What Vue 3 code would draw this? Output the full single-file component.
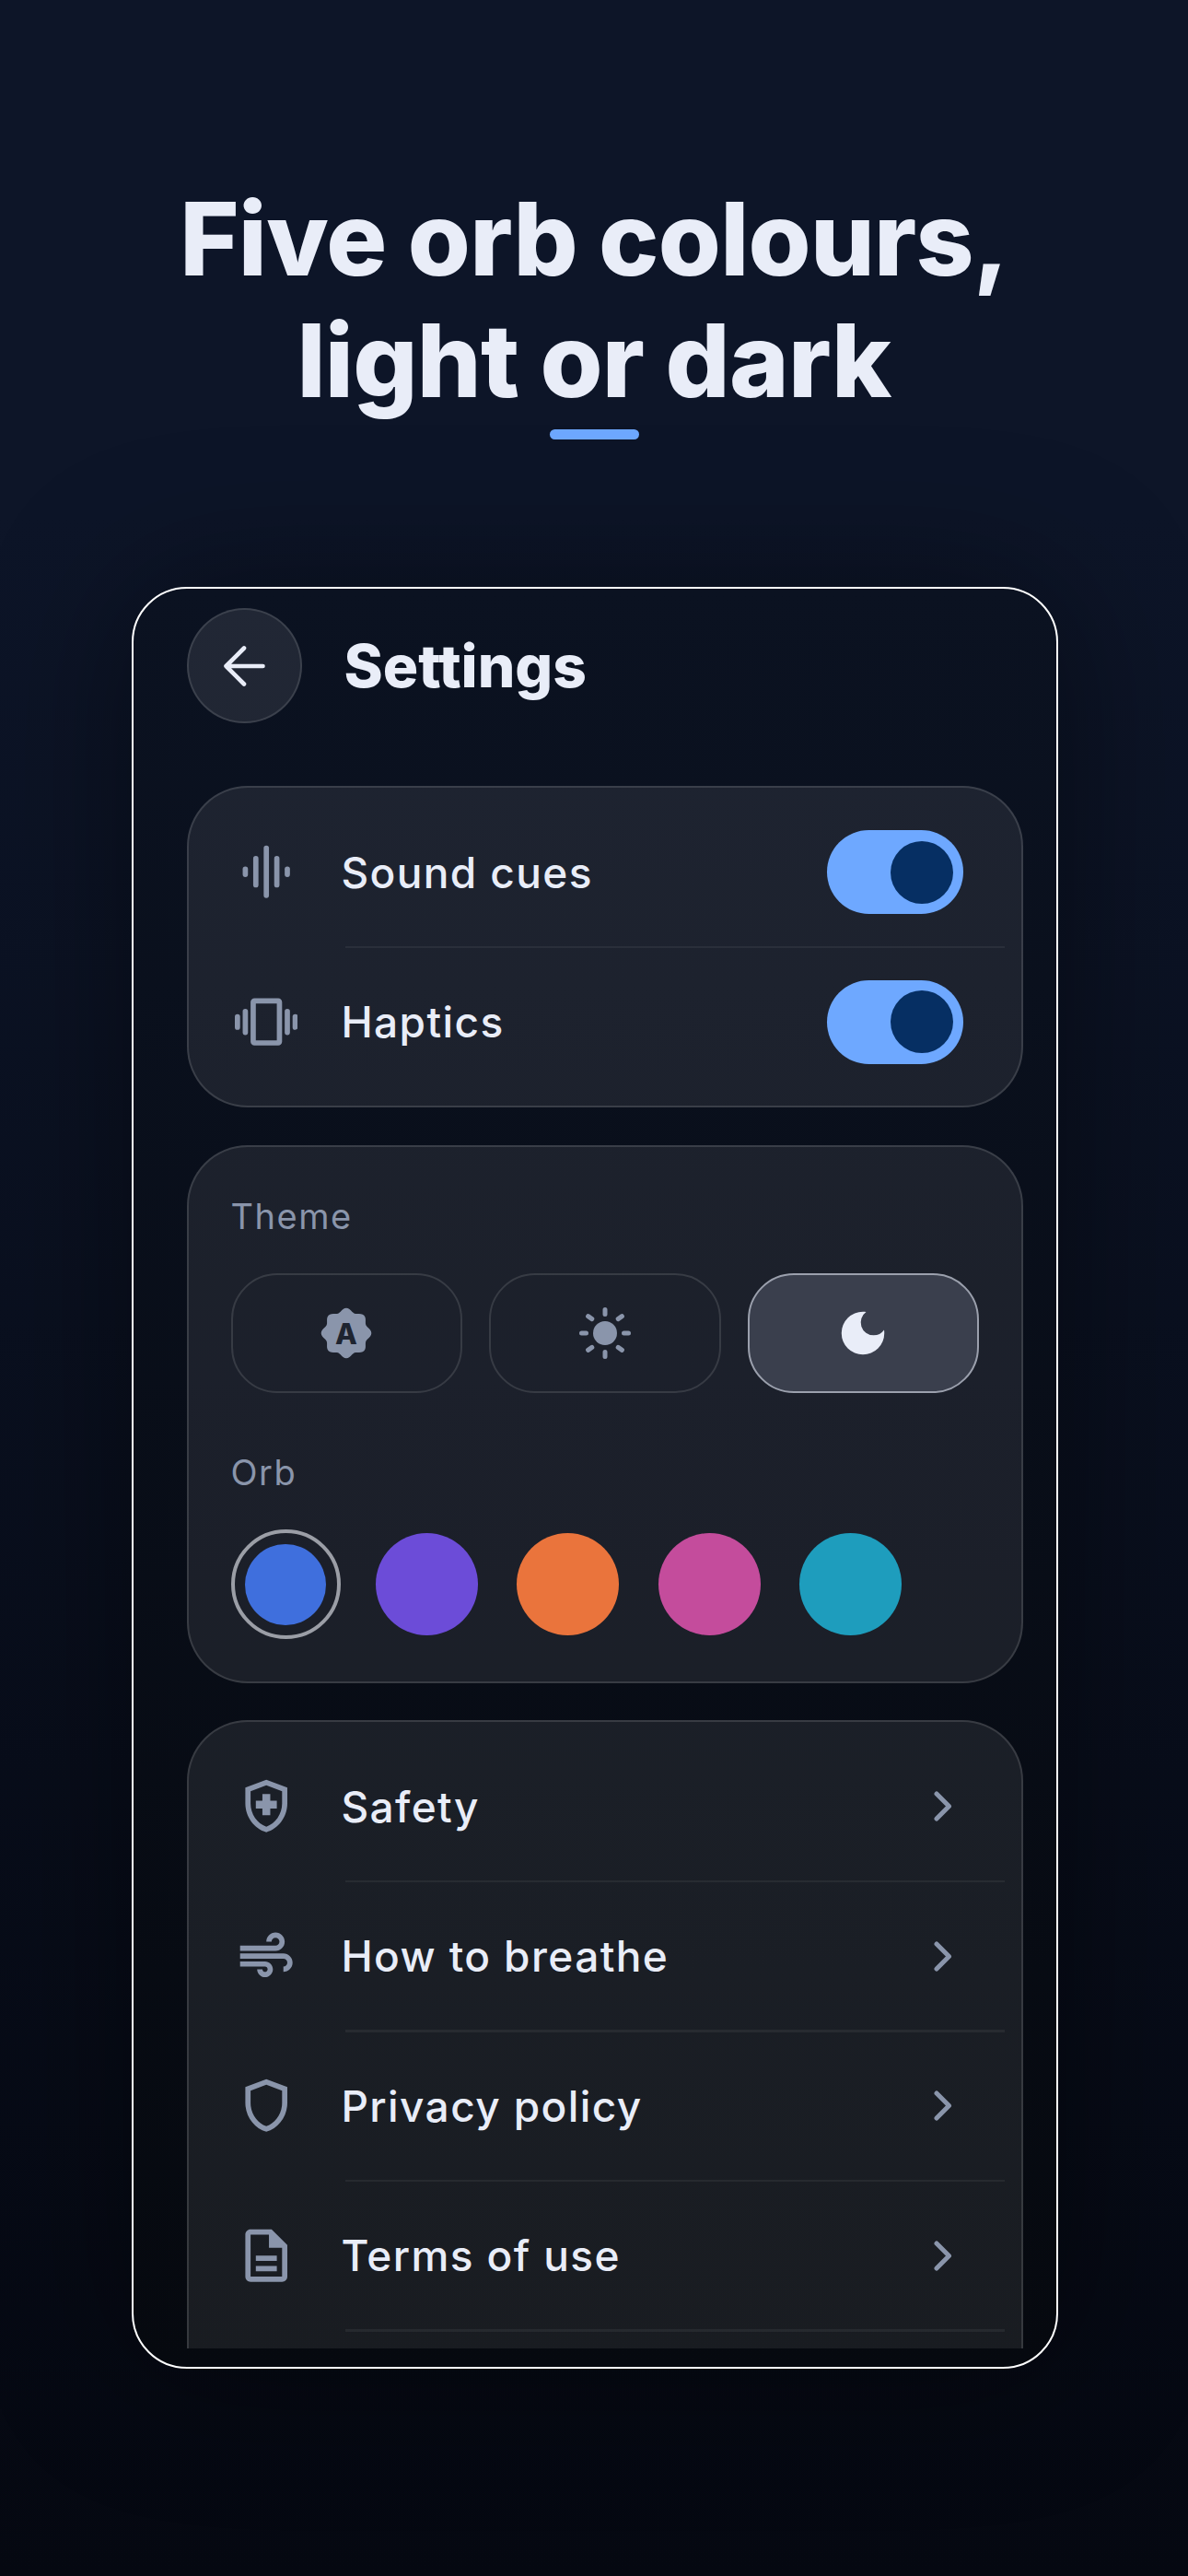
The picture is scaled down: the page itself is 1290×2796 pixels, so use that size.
<template>
  <div class="page">
    <header class="hero">
      <h1>Five orb colours,<br />light or dark</h1>
      <div class="accent"></div>
    </header>

    <section class="frame">
      <div class="screen">
        <div class="top-bar">
          <button type="button" class="back" aria-label="Back">
            <svg width="64" height="64" viewBox="0 0 64 64" fill="none" stroke="#e9edf8" stroke-width="4.6" stroke-linecap="round" stroke-linejoin="round">
              <path d="M52.5 32H12.5M32 12.5 12.5 32 32 51.5" />
            </svg>
          </button>
          <h2>Settings</h2>
        </div>

        <!-- Toggles -->
        <div class="card">
          <template v-for="(item, i) in toggles" :key="item.label">
            <div class="row">
              <svg class="row-icon" viewBox="0 0 24 24" fill="#8a95ab">
                <template v-if="item.icon === 'sound'">
                  <rect x="3" y="10" width="2" height="4" rx="1" />
                  <rect x="7" y="6" width="2" height="12" rx="1" />
                  <rect x="11" y="2" width="2" height="20" rx="1" />
                  <rect x="15" y="6" width="2" height="12" rx="1" />
                  <rect x="19" y="10" width="2" height="4" rx="1" />
                </template>
                <template v-else>
                  <rect x="0" y="9" width="2" height="6" rx="1" />
                  <rect x="3" y="7" width="2" height="10" rx="1" />
                  <rect x="22" y="9" width="2" height="6" rx="1" />
                  <rect x="19" y="7" width="2" height="10" rx="1" />
                  <path d="M16.5 3h-9C6.67 3 6 3.67 6 4.5v15c0 .83.67 1.5 1.5 1.5h9c.83 0 1.5-.67 1.5-1.5v-15c0-.83-.67-1.5-1.5-1.5zM16 19H8V5h8v14z" />
                </template>
              </svg>
              <span class="row-label">{{ item.label }}</span>
              <span class="toggle"><span class="thumb"></span></span>
            </div>
            <div v-if="i < toggles.length - 1" class="divider"></div>
          </template>
        </div>

        <!-- Theme and orb -->
        <div class="card picker">
          <div class="field-label">Theme</div>
          <div class="themes">
            <button type="button" class="theme">
              <svg width="64" height="64" viewBox="0 0 64 64">
                <path :d="badgePath" fill="#8a95ab" />
                <text x="32" y="43.5" text-anchor="middle" class="badge-letter">A</text>
              </svg>
            </button>
            <button type="button" class="theme">
              <svg width="64" height="64" viewBox="0 0 64 64" stroke="#8a95ab" stroke-width="5" stroke-linecap="round" fill="#8a95ab">
                <circle cx="32" cy="32" r="13" stroke="none" />
                <path d="M32 6.5v5M32 52.5v5M6.5 32h5M52.5 32h5M13.6 13.6l4.2 3M50.4 13.6l-4.2 3M13.6 50.4l4.2-3M50.4 50.4l-4.2-3" />
              </svg>
            </button>
            <button type="button" class="theme active">
              <svg width="62" height="62" viewBox="0 0 24 24" fill="#e9edf8">
                <path d="M12 3a9 9 0 1 0 9 9c0-.46-.04-.92-.1-1.36a5.389 5.389 0 0 1-4.4 2.26 5.403 5.403 0 0 1-3.14-9.8c-.44-.06-.9-.1-1.36-.1z" />
              </svg>
            </button>
          </div>

          <div class="field-label orb-label">Orb</div>
          <div class="orbs">
            <span
              v-for="(orb, i) in orbs"
              :key="orb"
              class="orb"
              :class="{ selected: i === 0 }"
            >
              <span class="dot" :style="{ background: orb, width: i === 0 ? '88px' : '111px', height: i === 0 ? '88px' : '111px' }"></span>
            </span>
          </div>
        </div>

        <!-- Links -->
        <div class="card links">
          <template v-for="link in links" :key="link.label">
            <div class="row">
              <svg class="row-icon" viewBox="0 0 24 24" fill="#8a95ab">
                <path :d="link.d" />
              </svg>
              <span class="row-label">{{ link.label }}</span>
              <svg class="chevron" width="45" height="45" viewBox="0 0 45 45" fill="none" stroke="#8a95ab" stroke-width="5" stroke-linecap="round" stroke-linejoin="round">
                <path d="M16 9 29.5 22.5 16 36" />
              </svg>
            </div>
            <div class="divider"></div>
          </template>
        </div>
      </div>
    </section>
  </div>
</template>

<script setup>
const toggles = [
  { label: 'Sound cues', icon: 'sound' },
  { label: 'Haptics', icon: 'haptics' }
]

const orbs = ['#3f6fdd', '#6c4cd8', '#ea743c', '#c44c9c', '#1e9dbd']

const links = [
  {
    label: 'Safety',
    d: 'M10.5 13H8v-3h2.5V7.5h3V10H16v3h-2.5v2.5h-3V13zM12 2 4 5v6.09c0 5.05 3.41 9.76 8 10.91 4.59-1.15 8-5.86 8-10.91V5l-8-3zm6 9.09c0 4-2.55 7.7-6 8.83-3.45-1.13-6-4.82-6-8.83v-4.7l6-2.25 6 2.25v4.7z'
  },
  {
    label: 'How to breathe',
    d: 'M14.5 17c0 1.65-1.35 3-3 3s-3-1.35-3-3h2c0 .55.45 1 1 1s1-.45 1-1-.45-1-1-1H2v-2h9.5c1.65 0 3 1.35 3 3zM19 6.5C19 4.57 17.43 3 15.5 3S12 4.57 12 6.5h2c0-.83.67-1.5 1.5-1.5s1.5.67 1.5 1.5S16.33 8 15.5 8H2v2h13.5c1.93 0 3.5-1.57 3.5-3.5zm-.5 4.5H2v2h16.5c.83 0 1.5.67 1.5 1.5s-.67 1.5-1.5 1.5v2c1.93 0 3.5-1.57 3.5-3.5S20.43 11 18.5 11z'
  },
  {
    label: 'Privacy policy',
    d: 'M12 2 4 5v6.09c0 5.05 3.41 9.76 8 10.91 4.59-1.15 8-5.86 8-10.91V5l-8-3zm6 9.09c0 4-2.55 7.7-6 8.83-3.45-1.13-6-4.82-6-8.83v-4.7l6-2.25 6 2.25v4.7z'
  },
  {
    label: 'Terms of use',
    d: 'M8 16h8v2H8zm0-4h8v2H8zm6-10H6c-1.1 0-2 .9-2 2v16c0 1.1.89 2 1.99 2H18c1.1 0 2-.9 2-2V8l-6-6zm4 18H6V4h7v5h5v11z'
  }
]

// Scalloped badge behind the "A"
const badgePoints = []
for (let i = 0; i < 96; i++) {
  const angle = (i / 96) * Math.PI * 2
  const radius = 25.2 + 2.1 * Math.cos(angle * 8)
  badgePoints.push(`${(32 + radius * Math.cos(angle)).toFixed(2)} ${(32 + radius * Math.sin(angle)).toFixed(2)}`)
}
const badgePath = `M${badgePoints.join('L')}Z`
</script>

<style>
html,
body {
  margin: 0;
  background: #04070f;
}
</style>

<style scoped>
.page {
  width: 1290px;
  height: 2796px;
  overflow: hidden;
  box-sizing: border-box;
  padding-top: 193px;
  background: linear-gradient(180deg, #0d1528 0%, #0d1528 20%, #050811 100%);
  font-family: Inter, "Noto Sans", sans-serif;
  color: #e9edf8;
}

.hero {
  text-align: center;
}

.hero h1 {
  margin: 0;
  font-size: 110px;
  line-height: 132px;
  font-weight: 800;
  letter-spacing: -0.75px;
}

.accent {
  width: 97px;
  height: 11px;
  margin: 9px auto 0;
  border-radius: 6px;
  background: #6ea8ff;
}

.frame {
  width: 1006.5px;
  height: 1934px;
  margin: 160px 0 0 142.5px;
  box-sizing: border-box;
  padding: 21px 36px 20px 58px;
  border: 2px solid #fff;
  border-radius: 60px;
  background: linear-gradient(180deg, #0b1221 0%, #06090f 100%);
  box-shadow: 0 0 160px rgba(0, 0, 0, 0.4);
}

.screen {
  height: 100%;
  overflow: hidden;
  display: flex;
  flex-direction: column;
}

.top-bar {
  display: flex;
  align-items: center;
  gap: 46px;
  margin-bottom: 68px;
  flex: none;
}

.top-bar h2 {
  margin: 0;
  font-size: 64px;
  font-weight: 800;
  line-height: 78px;
}

.back {
  width: 125px;
  height: 125px;
  flex: none;
  padding: 0;
  display: flex;
  align-items: center;
  justify-content: center;
  border: 2.5px solid rgba(255, 255, 255, 0.12);
  border-radius: 50%;
  background: rgba(255, 255, 255, 0.09);
}

.card {
  flex: none;
  box-sizing: border-box;
  padding: 11.5px 18px 11px;
  margin-bottom: 40.5px;
  border: 2.5px solid rgba(255, 255, 255, 0.13);
  border-radius: 66px;
  background: rgba(255, 255, 255, 0.08);
}

.row {
  height: 160px;
  display: flex;
  align-items: center;
  padding: 0 45px 0 32px;
}

.row-icon {
  width: 68.4px;
  height: 68.4px;
  flex: none;
}

.row-label {
  flex: 1;
  margin-left: 47.5px;
  font-size: 46px;
  font-weight: 500;
  letter-spacing: 1.4px;
  white-space: nowrap;
}

.chevron {
  flex: none;
}

.divider {
  height: 2.5px;
  margin-left: 152px;
  background: rgba(255, 255, 255, 0.06);
}

.toggle {
  width: 148px;
  height: 91px;
  flex: none;
  display: flex;
  align-items: center;
  justify-content: flex-end;
  padding-right: 11.5px;
  box-sizing: border-box;
  border-radius: 46px;
  background: #6ea8ff;
}

.thumb {
  width: 68px;
  height: 68px;
  border-radius: 50%;
  background: #062f63;
}

.picker {
  padding: 52.5px 46px 45.5px;
}

.field-label {
  font-size: 38px;
  line-height: 46px;
  letter-spacing: 1.5px;
  color: #8a95ab;
}

.themes {
  display: grid;
  grid-template-columns: repeat(3, 1fr);
  gap: 29px;
  margin-top: 39px;
}

.theme {
  height: 130px;
  padding: 0;
  display: flex;
  align-items: center;
  justify-content: center;
  border: 2.5px solid rgba(255, 255, 255, 0.12);
  border-radius: 50px;
  background: transparent;
}

.theme.active {
  background: #3a3f4d;
  border-color: #9ba0ad;
}

.badge-letter {
  font-family: Inter, sans-serif;
  font-size: 31px;
  font-weight: 800;
  fill: #1e2430;
}

.orb-label {
  margin-top: 63px;
}

.orbs {
  display: flex;
  gap: 34.4px;
  margin-top: 39px;
}

.orb {
  width: 119px;
  height: 119px;
  flex: none;
  box-sizing: border-box;
  display: flex;
  align-items: center;
  justify-content: center;
  border-radius: 50%;
}

.orb.selected {
  border: 4px solid #9b9ea6;
}

.dot {
  display: block;
  flex: none;
  border-radius: 50%;
}

.links {
  margin-bottom: 0;
  padding-bottom: 120px;
}
</style>
